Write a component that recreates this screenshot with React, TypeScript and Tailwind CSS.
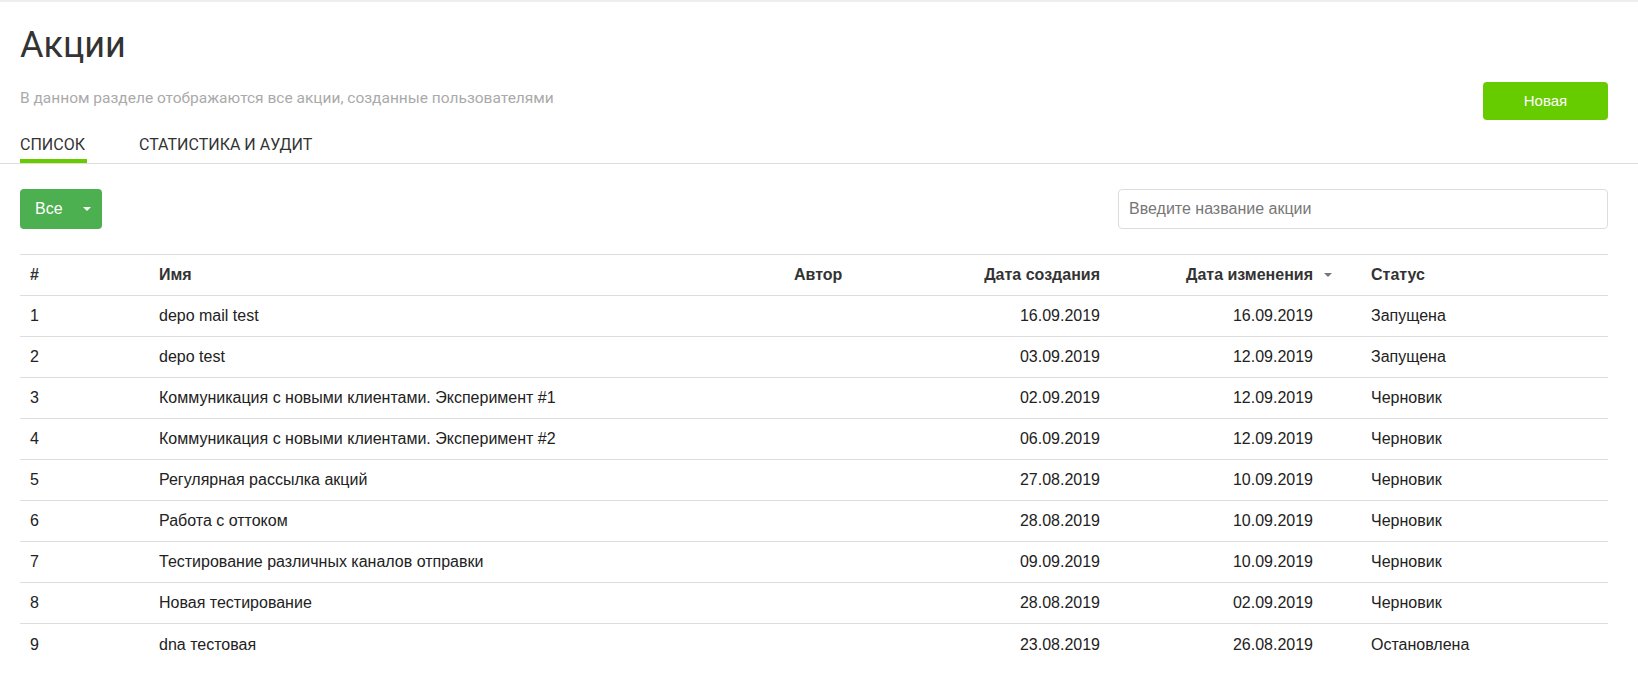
import { type FC } from "react";

interface Promo {
	id: number;
	name: string;
	author: string;
	created: string;
	updated: string;
	status: string;
}

const promos: Promo[] = [
	{ id: 1, name: "depo mail test", author: "", created: "16.09.2019", updated: "16.09.2019", status: "Запущена" },
	{ id: 2, name: "depo test", author: "", created: "03.09.2019", updated: "12.09.2019", status: "Запущена" },
	{ id: 3, name: "Коммуникация с новыми клиентами. Эксперимент #1", author: "", created: "02.09.2019", updated: "12.09.2019", status: "Черновик" },
	{ id: 4, name: "Коммуникация с новыми клиентами. Эксперимент #2", author: "", created: "06.09.2019", updated: "12.09.2019", status: "Черновик" },
	{ id: 5, name: "Регулярная рассылка акций", author: "", created: "27.08.2019", updated: "10.09.2019", status: "Черновик" },
	{ id: 6, name: "Работа с оттоком", author: "", created: "28.08.2019", updated: "10.09.2019", status: "Черновик" },
	{ id: 7, name: "Тестирование различных каналов отправки", author: "", created: "09.09.2019", updated: "10.09.2019", status: "Черновик" },
	{ id: 8, name: "Новая тестирование", author: "", created: "28.08.2019", updated: "02.09.2019", status: "Черновик" },
	{ id: 9, name: "dna тестовая", author: "", created: "23.08.2019", updated: "26.08.2019", status: "Остановлена" },
];

const rowGrid =
	"grid grid-cols-[129px_635px_106px_200px_232px_1fr] items-center h-[41px] pl-[10px]";

const Caret: FC<{ className?: string }> = ({ className }) => (
	<svg width="8" height="4" viewBox="0 0 8 4" className={className}>
		<path d="M0 0h8L4 4z" fill="currentColor" />
	</svg>
);

export default function App() {
	return (
		<div className="min-h-screen bg-white border-t-2 border-[#eeeeee] font-['Roboto',sans-serif]">
			{/* header */}
			<div className="border-b border-[#dddddd]">
				<div className="pl-[20px] pr-[30px] pt-[21px]">
					<h1 className="text-[36px] leading-[44px] font-normal text-[#333333] m-0">
						Акции
					</h1>
					<div className="flex justify-between items-start mt-[15px]">
						<p className="pt-[6px] text-[15.5px] leading-[20px] text-[#aaaaaa]">
							В данном разделе отображаются все акции, созданные пользователями
						</p>
						<button className="w-[125px] h-[38px] rounded-[4px] bg-[#66cc00] text-white text-[15px] font-['Liberation_Sans',sans-serif]">
							Новая
						</button>
					</div>
					<div className="flex mt-[15px] text-[16px] leading-[20px] text-[#333333] uppercase">
						<div className="w-[67px] pb-[4px] border-b-4 border-[#66cc00]">Список</div>
						<div className="ml-[52px] pb-[4px] border-b-4 border-transparent">
							Статистика и аудит
						</div>
					</div>
				</div>
			</div>

			{/* content */}
			<div className="pl-[20px] pr-[30px] pt-[25px] font-['Liberation_Sans',Arial,sans-serif]">
				<div className="flex justify-between items-center">
					<button className="flex items-center w-[82px] h-[40px] pl-[15px] rounded-[4px] bg-[#4caf50] text-white text-[16px]">
						<span>Все</span>
						<Caret className="ml-[20px]" />
					</button>
					<input
						className="w-[490px] h-[40px] px-[10px] rounded-[4px] border border-[#dddddd] text-[16px] text-[#333333] placeholder:text-[#777777] outline-none"
						placeholder="Введите название акции"
					/>
				</div>

				<div className="mt-[25px] border-t border-[#dddddd] text-[16px] text-[#222222]">
					<div className={`${rowGrid} border-b border-[#dddddd] font-bold text-[#333333]`}>
						<div>#</div>
						<div>Имя</div>
						<div>Автор</div>
						<div className="text-right">Дата создания</div>
						<div className="flex items-center justify-end">
							<span>Дата изменения</span>
							<Caret className="ml-[11px] text-[#777777]" />
						</div>
						<div className="pl-[39px]">Статус</div>
					</div>
					{promos.map((p, i) => (
						<div
							key={p.id}
							className={`${rowGrid} ${i < promos.length - 1 ? "border-b border-[#dddddd]" : ""}`}
						>
							<div>{p.id}</div>
							<div>{p.name}</div>
							<div>{p.author}</div>
							<div className="text-right">{p.created}</div>
							<div className="text-right pr-[19px]">{p.updated}</div>
							<div className="pl-[39px]">{p.status}</div>
						</div>
					))}
				</div>
			</div>
		</div>
	);
}
